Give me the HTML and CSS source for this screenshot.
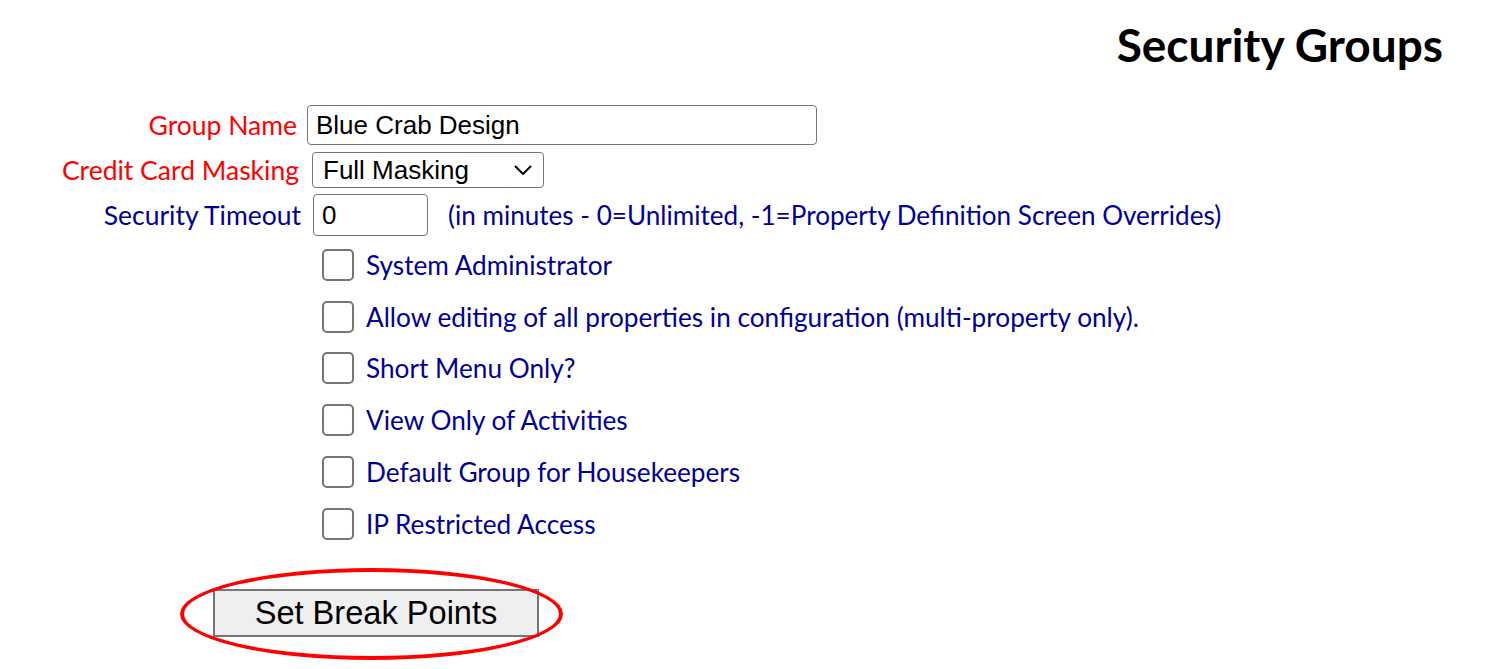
FILE: index.html
```html
<!DOCTYPE html>
<html lang="en">
<head>
    <meta charset="UTF-8">
    <meta name="viewport" content="width=device-width, initial-scale=1.0">
    <title>Security Groups</title>
    <link rel="stylesheet" href="styles.css">
</head>
<body>
    <h1>Security Groups</h1>
    <form id="groupForm">
        <div class="row row-name">
            <label for="groupName" class="required">Group Name</label>
            <input type="text" id="groupName" class="text-name" value="Blue Crab Design">
        </div>
        <div class="row row-mask">
            <label for="masking" class="required">Credit Card Masking</label>
            <select id="masking">
                <option>Full Masking</option>
                <option>Partial Masking</option>
                <option>No Masking</option>
            </select>
        </div>
        <div class="row row-timeout">
            <label for="timeout">Security Timeout</label>
            <input type="text" id="timeout" class="text-timeout" value="0">
            <span class="hint">(in minutes - 0=Unlimited, -1=Property Definition Screen Overrides)</span>
        </div>

        <div class="checks">
            <label class="check"><input type="checkbox"> System Administrator</label>
            <label class="check"><input type="checkbox"> Allow editing of all properties in configuration (multi-property only).</label>
            <label class="check"><input type="checkbox"> Short Menu Only?</label>
            <label class="check"><input type="checkbox"> View Only of Activities</label>
            <label class="check"><input type="checkbox"> Default Group for Housekeepers</label>
            <label class="check"><input type="checkbox"> IP Restricted Access</label>
        </div>

        <div class="button-wrap">
            <button type="button">Set Break Points</button>
            <span class="circle"></span>
        </div>
    </form>
</body>
</html>
```

FILE: styles.css
```css
body {
    margin: 0;
    padding: 0;
    font-family: 'Lato', sans-serif;
    color: #000099;
    background: #ffffff;
}

h1 {
    margin: 0;
    padding: 13px 49px 0 0;
    text-align: right;
    font-size: 46px;
    font-weight: bold;
    line-height: 64px;
    color: #000000;
}

form {
    padding: 28px 0 40px;
}

.row {
    display: flex;
    align-items: center;
    font-size: 26.5px;
}

.row label {
    width: 297px;
    text-align: right;
}

.required {
    color: #ff0000;
}

input[type="text"], select {
    font-family: 'Liberation Sans', Arial, sans-serif;
    font-size: 26px;
    color: #000000;
    border: 1px solid #767676;
    border-radius: 4px;
    background: #ffffff;
    box-sizing: border-box;
}

.text-name {
    margin-left: 10px;
    width: 510px;
    height: 40px;
    padding: 0 8px;
}

.row-mask {
    margin-top: 7px;
}

.row-mask label {
    width: 299px;
}

select {
    margin-left: 13px;
    width: 232px;
    height: 36px;
    padding: 0 6px 0 10px;
    appearance: none;
    background-image: url("data:image/svg+xml;utf8,<svg xmlns='http://www.w3.org/2000/svg' width='18' height='10' viewBox='0 0 18 10'><path d='M1 1 L9 9 L17 1' fill='none' stroke='black' stroke-width='2'/></svg>");
    background-repeat: no-repeat;
    background-position: right 11px center;
}

.row-timeout {
    margin-top: 6px;
}

.row-timeout label {
    width: 301px;
}

.text-timeout {
    margin-left: 12px;
    width: 115px;
    height: 42px;
    padding: 0 8px;
    border-width: 2px;
}

.hint {
    margin-left: 20px;
    font-size: 26.1px;
}

.checks {
    display: flex;
    flex-direction: column;
    margin-top: 3px;
    padding-left: 322px;
}

.check {
    display: flex;
    align-items: center;
    height: 51.8px;
    font-size: 26.2px;
}

.check input {
    appearance: none;
    margin: 0 12px 0 0;
    width: 32px;
    height: 32px;
    border: 2px solid #767676;
    border-radius: 5px;
    background: #ffffff;
    box-sizing: border-box;
}

.button-wrap {
    position: relative;
    margin: 39px 0 0 213px;
    width: 326px;
}

.button-wrap button {
    display: block;
    width: 326px;
    height: 48px;
    font-family: 'Liberation Sans', Arial, sans-serif;
    font-size: 32.6px;
    color: #000000;
    background: #efefef;
    border: 2px solid #767676;
    padding: 0;
}

.circle {
    position: absolute;
    left: -33px;
    top: -21px;
    width: 383px;
    height: 92px;
    border: 4px solid #ff0000;
    border-radius: 50%;
    box-sizing: border-box;
    pointer-events: none;
}
```
